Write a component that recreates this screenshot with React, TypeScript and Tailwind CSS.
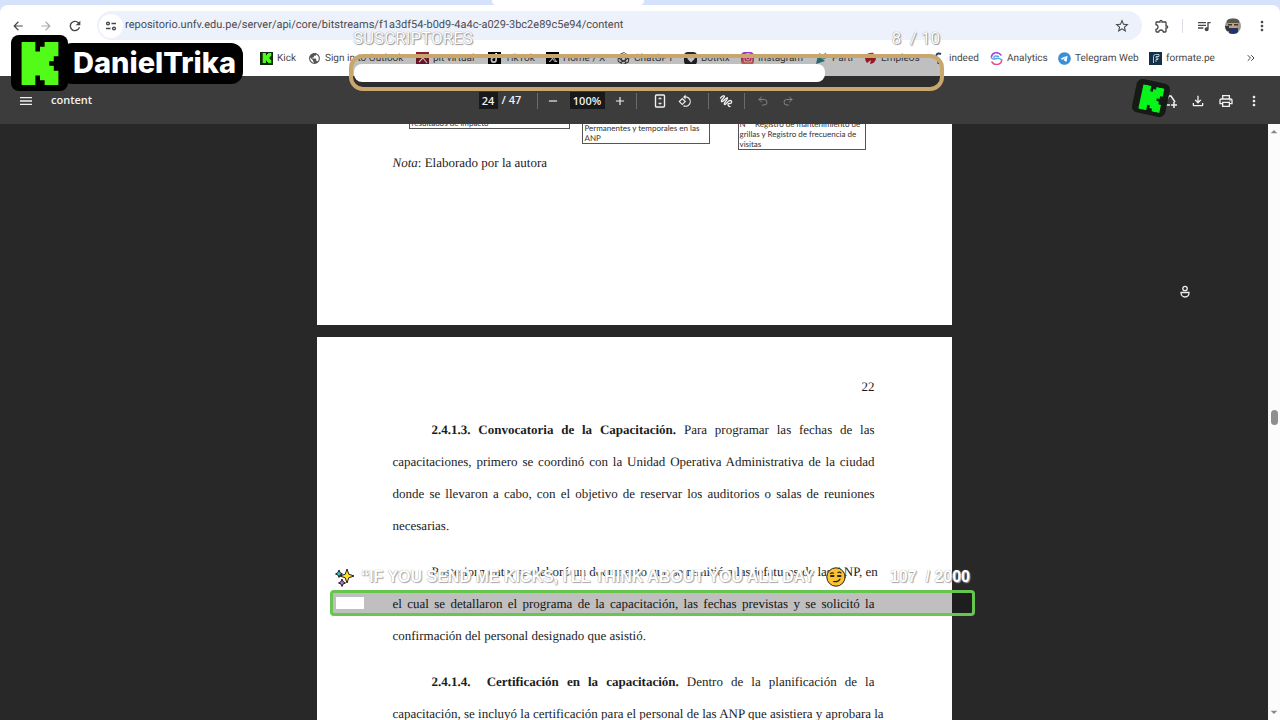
import React from 'react';
import {
  MdArrowBack, MdArrowForward, MdRefresh, MdStarBorder, MdOutlineExtension, MdQueueMusic, MdMoreVert, MdMenu,
  MdAdd, MdRemove, MdRotate90DegreesCcw, MdOutlineFileDownload, MdOutlinePrint, MdPublic, MdArrowDropUp, MdArrowDropDown,
} from 'react-icons/md';
import { FaTiktok, FaXTwitter, FaInstagram, FaTelegram } from 'react-icons/fa6';
import { Undo2, Redo2, ChevronsRight } from 'lucide-react';

const KICK_PATH =
  'M37 0h164v114h55V57h55V0h164v171h-55v57h-54v56h54v57h55v171H311v-57h-55v-57h-55v114H37z';

function KickLogo({ className }: { className: string }) {
  return (
    <svg viewBox="37 0 438 512" className={className} fill="currentColor">
      <path d={KICK_PATH} />
    </svg>
  );
}

function TuneIcon() {
  return (
    <svg viewBox="0 0 14 14" className="h-3.5 w-3.5" fill="none" stroke="currentColor" strokeWidth="1.4">
      <circle cx="4" cy="4.5" r="1.400" />
      <path d="M7.500 4.500H12M2 9.500h4.500" />
      <circle cx="10" cy="9.500" r="1.400" />
    </svg>
  );
}

function GptIcon() {
  return (
    <svg viewBox="-12 -12 24 24" className="h-[13px] w-[13px]" fill="none" stroke="#444" strokeWidth="1.8">
      {[0, 60, 120, 180, 240, 300].map((a) => (
        <path key={a} transform={`rotate(${a})`} d="M-4 5V-6a4.5 4.5 0 0 1 8-3L7-7" />
      ))}
    </svg>
  );
}

function Tile({ className, children }: { className: string; children?: React.ReactNode }) {
  return <span className={`flex h-[13px] w-[13px] items-center justify-center ${className}`}>{children}</span>;
}

const BOOKMARKS = [
  {
    label: 'Kick', width: 'w-[48px]',
    icon: <Tile className="bg-[#102a0c] text-[#4dfb1c]"><KickLogo className="h-2.5 w-2.5" /></Tile>,
  },
  { label: 'Sign in to Outlook', width: 'w-[108px]', icon: <MdPublic className="h-[13px] w-[13px] text-[#555]" /> },
  {
    label: 'pit virtual', width: 'w-[72px]',
    icon: (
      <Tile className="bg-[#8c1d33] text-white">
        <svg viewBox="0 0 12 12" className="h-3 w-3" fill="none" stroke="currentColor" strokeWidth="1.2">
          <path d="M2 10l3-3 1-4M6 3l4 3M6 6l4 5M2 4l2 1" />
        </svg>
      </Tile>
    ),
  },
  { label: 'TikTok', width: 'w-[58px]', icon: <Tile className="bg-black text-white"><FaTiktok className="h-2.5 w-2.5" /></Tile> },
  { label: 'Home / X', width: 'w-[71px]', icon: <Tile className="bg-black text-white"><FaXTwitter className="h-2.5 w-2.5" /></Tile> },
  { label: 'ChatGPT', width: 'w-[67px]', icon: <GptIcon /> },
  {
    label: 'BotRix', width: 'w-[57px]',
    icon: (
      <Tile className="rounded-sm bg-[#262a2c] text-white">
        <svg viewBox="0 0 12 12" className="h-3 w-3" fill="currentColor"><path d="M2.5 3l3.5 1 3.500-1v4L6 10.500 2.500 7z" /></svg>
      </Tile>
    ),
  },
  {
    label: 'Instagram', width: 'w-[74px]',
    icon: (
      <Tile className="rounded bg-linear-to-b from-[#9a2bd8] via-[#e6237c] to-[#f79a3a] text-white">
        <FaInstagram className="h-2.5 w-2.5" />
      </Tile>
    ),
  },
  {
    label: 'Parti', width: 'w-[49px]',
    icon: (
      <svg viewBox="0 0 13 13" className="h-[13px] w-[13px]">
        <path d="M1 12L3 3l7 6z" fill="#3c8c96" />
        <path d="M6 5l5-4M8 7l4-2M4 3l1-2" stroke="#6aa9a5" strokeWidth="1.300" />
      </svg>
    ),
  },
  {
    label: 'Empleos', width: 'w-[68px]',
    icon: (
      <svg viewBox="0 0 13 13" className="h-[13px] w-[13px]" fill="#c81f2d">
        <path d="M1 4c2-3 6-4 9-3L7 5l5 1c0 3-3 6-6 6l1-4-4 3c-2-2-2-5-2-7z" />
      </svg>
    ),
  },
  {
    label: 'indeed', width: 'w-[58px]',
    icon: (
      <svg viewBox="0 0 13 13" className="h-[13px] w-[13px]" fill="none" stroke="#24406e" strokeWidth="2">
        <path d="M6.500 6v6M4 4c1-3 3-3 5-2" />
      </svg>
    ),
  },
  {
    label: 'Analytics', width: 'w-[68px]',
    icon: (
      <svg viewBox="0 0 13 13" className="h-[13px] w-[13px]" fill="none" strokeWidth="1.500" strokeLinecap="round">
        <path d="M1.300 5A5.300 5.300 0 0 1 11 3.200" stroke="#a444d8" />
        <path d="M11.800 8A5.300 5.300 0 0 1 2 10" stroke="#e24a8c" />
        <path d="M1.500 6c2 2 3 1 5 .5s4 .5 5 1.500M8.500 4.500C6 3.500 4 4 4 5.500" stroke="#56a8e6" />
      </svg>
    ),
  },
  { label: 'Telegram Web', width: 'w-[91px]', icon: <FaTelegram className="h-[13px] w-[13px] text-[#3a8fd6]" /> },
  {
    label: 'formate.pe', width: 'w-[70px]',
    icon: (
      <Tile className="bg-[#12304a] text-[#b9c7d2]">
        <svg viewBox="0 0 12 12" className="h-3 w-3" fill="none" stroke="currentColor" strokeWidth="1">
          <path d="M3.500 11V4.500a2 2 0 0 1 2-2H9v2H6V6h2v1.500H6V10" />
        </svg>
      </Tile>
    ),
  },
];

function Divider({ className }: { className: string }) {
  return <span className={`h-4 w-px bg-[#6b6b6b] ${className}`} />;
}

function BrowserBar() {
  return (
    <header className="shrink-0 bg-[#d5e2fb]">
      <div className="flex h-[5px]">
        <div className="ml-[492px] w-[152px] rounded-b-sm bg-white" />
      </div>
      <div className="rounded-t-lg bg-white text-[#474747]">
        <div className="flex items-center pt-1.5 pl-[11px]">
          <button aria-label="Back"><MdArrowBack className="h-3.5 w-3.5" /></button>
          <button aria-label="Forward" className="ml-3.5 text-[#aaa]"><MdArrowForward className="h-3.5 w-3.5" /></button>
          <button aria-label="Reload" className="ml-3.5"><MdRefresh className="h-4 w-4" /></button>
          <div className="ml-3.5 flex h-[29px] flex-1 items-center rounded-full bg-[#edf1fb] pr-3 pl-0.5">
            <button aria-label="Site information" className="flex h-6 w-6 items-center justify-center rounded-full bg-white">
              <TuneIcon />
            </button>
            <input
              aria-label="Address"
              className="ml-0.5 flex-1 bg-transparent font-[Roboto,sans-serif] text-[11px] text-[#4a4b50] outline-none [text-rendering:geometricPrecision]"
              defaultValue="repositorio.unfv.edu.pe/server/api/core/bitstreams/f1a3df54-b0d9-4a4c-a029-3bc2e89c5e94/content"
            />
            <button aria-label="Bookmark"><MdStarBorder className="h-4 w-4" /></button>
          </div>
          <button aria-label="Extensions" className="ml-3"><MdOutlineExtension className="h-4 w-4" /></button>
          <span className="ml-3 h-3.5 w-px bg-[#dadde6]" />
          <button aria-label="Media" className="ml-[13px]"><MdQueueMusic className="h-4 w-4" /></button>
          <button aria-label="Profile" className="ml-[13px] h-4 w-4 overflow-hidden rounded-full">
            <svg viewBox="0 0 16 16">
              <path d="M0 0h16v16H0z" fill="#9b9a8e" />
              <path d="M2 1h12v4H2z" fill="#59564a" />
              <path d="M4 5h8v5H4z" fill="#c79f80" />
              <path d="M3 6h4v1.500H3zM9 6h4v1.500H9zM0 8h4v5H0z" fill="#3b3733" />
              <path d="M4 10h9v6H4z" fill="#22356b" />
            </svg>
          </button>
          <button aria-label="Menu" className="mr-2.5 ml-[13px]"><MdMoreVert className="h-4 w-4" /></button>
        </div>
        <nav className="flex h-9 items-center font-[Roboto,sans-serif] text-[10px] [text-rendering:geometricPrecision]">
          <div className="flex flex-1 pl-[260px]">
            {BOOKMARKS.map((b) => (
              <a key={b.label} href="#" className={`flex shrink-0 items-center gap-1 whitespace-nowrap ${b.width}`}>
                {b.icon}
                {b.label}
              </a>
            ))}
          </div>
          <button aria-label="More bookmarks" className="mr-[23px]"><ChevronsRight className="h-3 w-3" /></button>
        </nav>
      </div>
    </header>
  );
}

function PdfToolbar() {
  return (
    <div className="grid h-12 shrink-0 grid-cols-[1fr_auto_1fr] items-center bg-[#3c3c3c] pt-px font-['Open_Sans',sans-serif] text-[11px] font-semibold text-[#f1f1f1]">
      <div className="flex items-center pl-[18px]">
        <button aria-label="Sidebar"><MdMenu className="h-4 w-4" /></button>
        <span className="ml-[17px]">content</span>
      </div>
      <div className="flex items-center pr-2">
        <input aria-label="Page" defaultValue="24" className="h-[17px] w-[19px] bg-[#191919] text-center outline-none" />
        <span className="ml-1 w-[22px]">/ 47</span>
        <Divider className="ml-[13px]" />
        <button aria-label="Zoom out" className="ml-2"><MdRemove className="h-3.5 w-3.5" /></button>
        <input aria-label="Zoom" defaultValue="100%" className="ml-2.5 h-[17px] w-[35px] bg-[#191919] text-center outline-none" />
        <button aria-label="Zoom in" className="ml-2"><MdAdd className="h-3.5 w-3.5" /></button>
        <Divider className="ml-[9px]" />
        <button aria-label="Fit to page" className="ml-4">
          <svg viewBox="0 0 14 14" className="h-3.5 w-3.5" fill="none" stroke="currentColor" strokeWidth="1.400">
            <rect x="2.500" y="1" width="9" height="12" rx="1" />
            <path d="M5.500 5L7 3.500 8.500 5zM5.500 9L7 10.500 8.500 9z" fill="currentColor" strokeWidth=".5" />
          </svg>
        </button>
        <button aria-label="Rotate" className="ml-[11px]"><MdRotate90DegreesCcw className="h-3.5 w-3.5" /></button>
        <Divider className="ml-4" />
        <button aria-label="Draw" className="ml-2.5">
          <svg viewBox="0 0 14 14" className="h-3.5 w-3.5" fill="none" stroke="currentColor" strokeWidth="1.300" strokeLinecap="round">
            <path d="M1.500 4C3 2 5.500 1 5.500 2.500S1.500 6 2.500 7.500 8 2.500 8.500 4 4 9.500 5.500 10.500 8.500 6.500 11 6.500s2 3.500-.5 3-1.500 3 .5 3" />
          </svg>
        </button>
        <Divider className="ml-[11px]" />
        <button aria-label="Undo" className="ml-3 text-[#858585]"><Undo2 className="h-3 w-3" /></button>
        <button aria-label="Redo" className="ml-[13px] text-[#858585]"><Redo2 className="h-3 w-3" /></button>
      </div>
      <div className="flex items-center justify-end gap-3 pr-[18px]">
        <button aria-label="Save to Drive">
          <svg viewBox="0 0 16 16" className="h-4 w-4" fill="none" stroke="currentColor" strokeWidth="1.500">
            <path d="M2 12l5-9h2l4 6M2 12h6M12 9v6M9 12h6" />
          </svg>
        </button>
        <button aria-label="Download"><MdOutlineFileDownload className="h-4 w-4" /></button>
        <button aria-label="Print"><MdOutlinePrint className="h-4 w-4" /></button>
        <button aria-label="More actions"><MdMoreVert className="h-4 w-4" /></button>
      </div>
    </div>
  );
}

function Line({ indent, children }: { indent?: boolean; children: React.ReactNode }) {
  return (
    <span className={`block whitespace-nowrap [text-align-last:justify] ${indent ? 'pl-[39px]' : ''}`}>{children}</span>
  );
}

function Document() {
  return (
    <main className="flex flex-1 flex-col items-center gap-3 font-['Liberation_Serif',serif] text-[13px] text-[#1c1c1c] [text-rendering:geometricPrecision]">
      <section className="h-[201px] w-[635px] shrink-0 bg-white pr-[77px] pl-[76px]">
        <div className="flex h-[26px] items-start pl-4 font-[Lato,sans-serif] text-[8px] leading-[10px] text-[#333]">
          <div className="flex h-[5px] w-[161px] flex-col justify-end overflow-hidden border border-t-0 border-[#555] px-0.5">
            <p>resultados de impacto</p>
          </div>
          <div className="ml-3 flex h-5 w-32 flex-col justify-end overflow-hidden border border-t-0 border-[#555] px-0.5">
            <p>Permanentes y temporales en las</p>
            <p>ANP</p>
          </div>
          <div className="ml-7 flex h-[26px] w-32 flex-col justify-end overflow-hidden border border-t-0 border-[#555] px-px whitespace-nowrap">
            <p>N° &nbsp; Registro de mantenimiento de</p>
            <p>grillas y Registro de frecuencia de</p>
            <p>visitas</p>
          </div>
        </div>
        <p className="mt-[3px] leading-5"><i>Nota</i>: Elaborado por la autora</p>
      </section>

      <section className="w-[635px] flex-1 bg-white pt-[34px] pr-[77px] pl-[76px] leading-8">
        <p className="mb-[11px] text-right">22</p>
        <p className="mb-3.5">
          <Line indent><b>2.4.1.3. Convocatoria de la Capacitación.</b> Para programar las fechas de las</Line>
          <Line>capacitaciones, primero se coordinó con la Unidad Operativa Administrativa de la ciudad</Line>
          <Line>donde se llevaron a cabo, con el objetivo de reservar los auditorios o salas de reuniones</Line>
          necesarias.
        </p>
        <p className="mb-3.5">
          <Line indent>Posteriormente, se elaboró un documento que se remitió a las jefaturas de las ANP, en</Line>
          <Line>el cual se detallaron el programa de la capacitación, las fechas previstas y se solicitó la</Line>
          confirmación del personal designado que asistió.
        </p>
        <p>
          <Line indent><b>2.4.1.4. &nbsp;Certificación en la capacitación.</b> Dentro de la planificación de la</Line>
          <Line>capacitación, se incluyó la certificación para el personal de las ANP que asistiera y aprobara la</Line>
        </p>
      </section>
    </main>
  );
}

function ScrollTrack() {
  return (
    <div className="flex w-3 flex-col items-center bg-[#fcfcfc] text-[#888]">
      <MdArrowDropUp className="h-4 w-4" />
      <div className="mt-[270px] h-[15px] w-[7px] rounded-full bg-[#8f8f8f]" />
      <MdArrowDropDown className="mt-auto h-4 w-4" />
    </div>
  );
}

function ChannelBadge() {
  return (
    <div className="absolute top-[35px] left-[11px] flex items-center">
      <div className="z-10 flex h-14 w-[57px] items-center justify-center rounded-lg bg-black text-[#53fc18]">
        <KickLogo className="h-[43px] w-[38px]" />
      </div>
      <div className="-ml-2 flex h-[41px] items-center rounded-xl bg-black pr-[7px] pl-[13px] font-[Inter,sans-serif] text-[29px] font-extrabold text-white">
        DanielTrika
      </div>
    </div>
  );
}

function SubscriberGoal() {
  return (
    <div className="absolute top-6 left-[349px] w-[595px]">
      <div className="flex h-[30px] items-center justify-between px-1 font-[Roboto,sans-serif] text-[17px] text-white [text-shadow:0_0_1px_#777,1px_1px_1px_#999]">
        <span>SUSCRIPTORES</span>
        <span className="whitespace-pre">8  / 10</span>
      </div>
      <div className="h-[37px] rounded-[14px] border-4 border-[#c9a76c] bg-black/25 px-px py-1.5">
        <div className="h-[18px] w-[471px] rounded-lg bg-white" />
      </div>
    </div>
  );
}

function Sparkles() {
  return (
    <svg viewBox="0 0 20 20" className="h-5 w-5" stroke="#222" strokeWidth="1" strokeLinejoin="round">
      <path d="M12 2l1.800 5.200L19 9l-5.200 1.800L12 16l-1.800-5.200L5 9l5.200-1.800z" fill="#ffe228" />
      <path d="M4 3l1 2.500L7.500 7 5 8l-1 2.500L3 8 .5 7 3 5.500z" fill="#40bcd0" />
      <path d="M7 12l1 2.500 2.500 1.500L8 17l-1 2.500L6 17l-2.500-1L6 14.500z" fill="#b86bd0" />
    </svg>
  );
}

function SmirkFace() {
  return (
    <svg viewBox="0 0 20 20" className="h-5 w-5" fill="none" stroke="#222" strokeWidth="1.200" strokeLinecap="round">
      <circle cx="10" cy="10" r="9.200" fill="#fcc32c" strokeWidth="1" />
      <path d="M4.500 6.500c1-.8 2-1 3-.3M12 5.500c1.200-.8 2.200-.5 3 .3M7.500 14.500c3 .600 5.500-.2 6.500-2.500" />
      <path d="M5 9h2.500M12 9h2.500" strokeWidth="2" />
    </svg>
  );
}

function KicksGoal() {
  return (
    <div className="absolute top-[563px] left-[330px] w-[645px]">
      <div className="flex h-[27px] items-center px-[5px] font-['Liberation_Sans',sans-serif] text-base font-bold text-white [text-shadow:0_0_1px_#888,1px_1px_1px_#aaa]">
        <Sparkles />
        <span className="mr-3 ml-1.5 whitespace-nowrap">“IF YOU SEND ME KICKS, I'LL THINK ABOUT YOU ALL DAY</span>
        <SmirkFace />
        <span className="ml-auto whitespace-pre">107  / 2000</span>
      </div>
      <div className="h-[26px] rounded-sm border-3 border-[#67c64f] bg-black/25 px-[3px] py-1">
        <div className="h-3 w-7 bg-white" />
      </div>
    </div>
  );
}

export default function App() {
  return (
    <div className="relative flex h-screen flex-col overflow-hidden bg-[#282828]">
      <BrowserBar />
      <PdfToolbar />
      <div className="flex min-h-0 flex-1 overflow-hidden">
        <Document />
        <ScrollTrack />
      </div>

      {/* Stream overlays */}
      <ChannelBadge />
      <SubscriberGoal />
      <KicksGoal />
      <div className="absolute top-[81px] left-[1134px] flex h-[34px] w-[34px] rotate-12 items-center justify-center rounded-md bg-[#151a14] text-[#08f51c]">
        <KickLogo className="h-[25px] w-[23px]" />
      </div>
      <svg viewBox="0 0 10 14" className="absolute top-[285px] left-[1180px] h-3.5 w-2.5" fill="none" stroke="#eee" strokeWidth="1.300">
        <circle cx="5" cy="3.500" r="2.200" />
        <path d="M1 7.500h8c0 3-2 4.500-4 4.500S1 10.500 1 7.500z" />
      </svg>
    </div>
  );
}
